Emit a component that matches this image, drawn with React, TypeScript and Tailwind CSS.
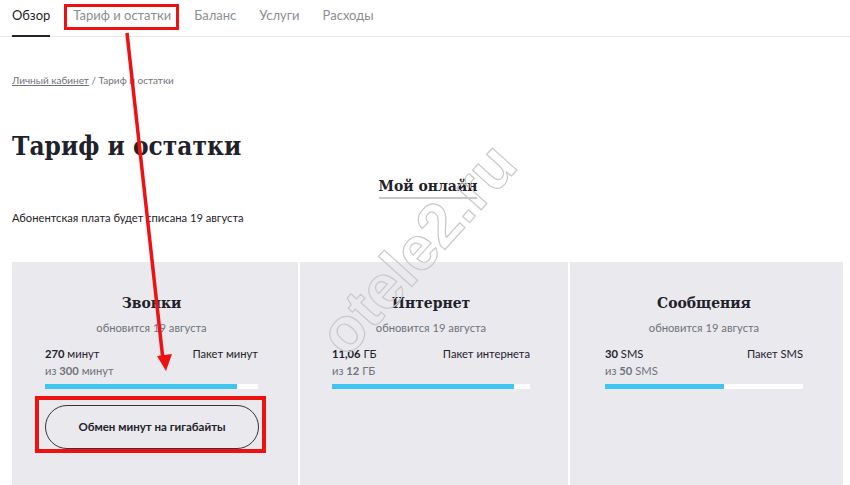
import React from 'react';

const sans = { fontFamily: 'Lato, "Open Sans", sans-serif' };
const serif = { fontFamily: '"DejaVu Serif", "Liberation Serif", serif', fontStretch: 'condensed' };

type Card = {
  title: string;
  used: string;
  total: string;
  unit: string;
  pack: string;
  fill: number;
};

const cards: Card[] = [
  { title: 'Звонки', used: '270', total: '300', unit: 'минут', pack: 'Пакет минут', fill: 90 },
  { title: 'Интернет', used: '11,06', total: '12', unit: 'ГБ', pack: 'Пакет интернета', fill: 92 },
  { title: 'Сообщения', used: '30', total: '50', unit: 'SMS', pack: 'Пакет SMS', fill: 60 },
];

const nav = ['Обзор', 'Тариф и остатки', 'Баланс', 'Услуги', 'Расходы'];

function RestCard({ card, className, inner, withButton }: { card: Card; className: string; inner: string; withButton?: boolean }) {
  return (
    <div className={'bg-[#e9e9ee] h-[240px] pt-[29px] ' + className}>
      <div className={'flex flex-col ' + inner}>
        <div className="text-center text-[15.5px] font-bold text-[#1f2229] leading-[24px]" style={serif}>
          {card.title}
        </div>
        <div className="text-center text-[11.2px] text-[#70737a] mt-[4px] leading-[18px]">обновится 19 августа</div>
        <div className="flex justify-between mt-[8px] text-[11.2px] leading-[17px] text-[#1f2229]">
          <div>
            <div>
              <span className="font-bold">{card.used}</span> {card.unit}
            </div>
            <div className="text-[#70737a]">
              из <span className="font-bold">{card.total}</span> {card.unit}
            </div>
          </div>
          <div>{card.pack}</div>
        </div>
        <div className="h-[5px] bg-white mt-[5px]">
          <div className="h-full bg-[#3fc5f0]" style={{ width: `${card.fill}%` }} />
        </div>
        {withButton && (
          <button className="mt-[16px] h-[44px] w-[214px] rounded-full border-[1.5px] border-[#33363d] text-[11.5px] font-bold text-[#1f2229]">
            Обмен минут на гигабайты
          </button>
        )}
      </div>
    </div>
  );
}

export default function App() {
  return (
    <div className="relative w-[850px] h-[485px] overflow-hidden bg-white text-[#1f2229]" style={sans}>
      {/* top menu */}
      <div className="flex gap-[23px] px-[12px] h-[37px] border-b border-[#e6e6e6] text-[13px]">
        {nav.map((item, i) => (
          <div
            key={item}
            className={
              i === 0
                ? 'pt-[6px] text-[#1f2229] border-b-2 border-[#1f2229] -mb-px'
                : 'pt-[6px] text-[#8b8d92]'
            }
          >
            {item}
          </div>
        ))}
      </div>

      <div className="px-[12px]">
        <div className="mt-[35px] text-[10px] text-[#70737a] leading-[16px]">
          <span className="underline">Личный кабинет</span> / Тариф и остатки
        </div>

        <h1 className="mt-[41px] text-[26px] font-bold leading-[34px] text-[#1f2229]" style={serif}>
          Тариф и остатки
        </h1>

        <div className="flex justify-center">
          <div className="mt-[12px] ml-[6px] text-[15.5px] font-bold leading-[22px] border-b-2 border-[#c8c8cc]" style={serif}>
            Мой онлайн
          </div>
        </div>

        <div className="mt-[11px] text-[11.2px] leading-[16px]">Абонентская плата будет списана 19 августа</div>

        <div className="mt-[36px] flex gap-[2px] w-[831px]">
          <RestCard card={cards[0]} className="w-[286px] pl-[33px]" inner="w-[213px]" withButton />
          <RestCard card={cards[1]} className="w-[268px] pl-[32px]" inner="w-[198px]" />
          <RestCard card={cards[2]} className="w-[273px] pl-[35px]" inner="w-[198px]" />
        </div>
      </div>

      {/* watermark */}
      <div
        className="absolute left-[288px] top-[202px] text-[62px] font-bold text-transparent -rotate-[48deg] origin-center select-none"
        style={{ fontFamily: '"Liberation Sans", sans-serif', WebkitTextStroke: '1.2px #c9c9cc' }}
      >
        otele2.ru
      </div>

      {/* annotations */}
      <div className="absolute left-[64px] top-[4px] w-[115px] h-[26px] border-[3px] border-[#ee1111]" />
      <div className="absolute left-[35px] top-[396px] w-[231px] h-[57px] border-[4px] border-[#ee1111]" />
      <svg className="absolute left-0 top-0" width="850" height="485">
        <line x1="127" y1="33" x2="163" y2="360" stroke="#ee1111" strokeWidth="3.5" />
        <polygon points="157,356 172,354 166,371" fill="#ee1111" />
      </svg>
    </div>
  );
}
